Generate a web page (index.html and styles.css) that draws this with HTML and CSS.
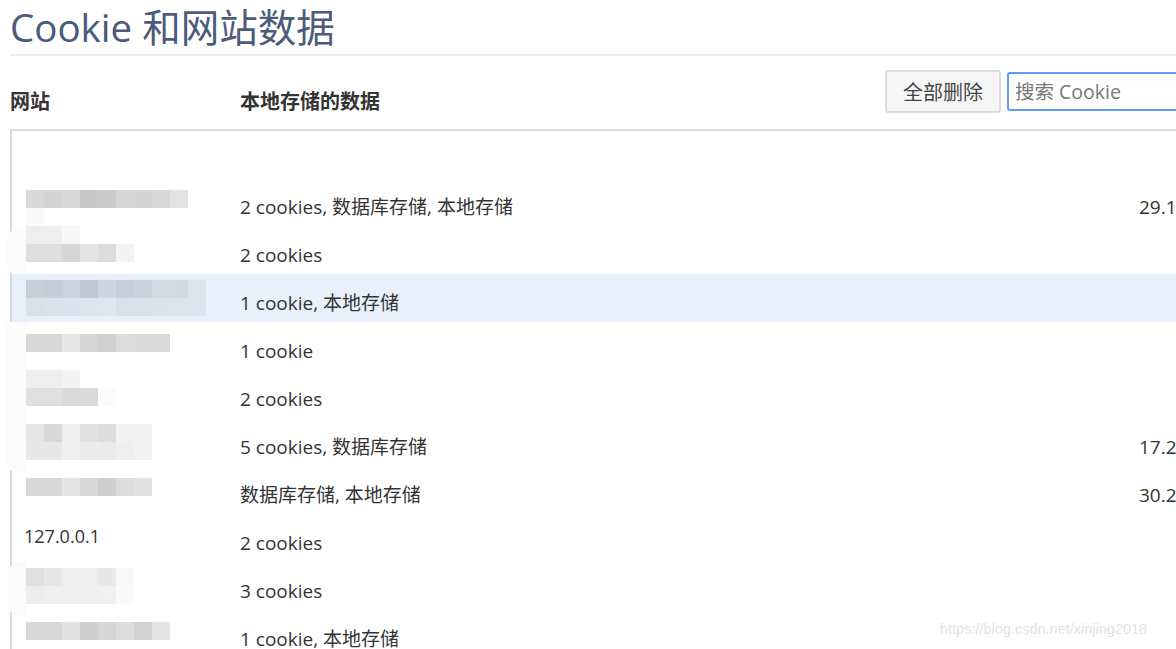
FILE: index.html
```html
<!DOCTYPE html>
<html lang="zh-CN">
<head>
<meta charset="utf-8">
<title>Cookie 和网站数据</title>
<link rel="stylesheet" href="styles.css">
</head>
<body>
<div class="page">
  <h1 class="title">Cookie 和网站数据</h1>
  <div class="header">
    <div class="hcol hsite">网站</div>
    <div class="hcol hdata">本地存储的数据</div>
    <div class="tools">
      <button class="btn">全部删除</button>
      <input class="search" type="text" placeholder="搜索 Cookie">
    </div>
  </div>
  <div class="list">
    <div class="row">
      <div class="site"><div class="mosaic o12">
        <div class="mr"><i style="background:#d9d9d9"></i><i style="background:#d4d4d4"></i><i style="background:#d8d8d8"></i><i style="background:#c8c8c8"></i><i style="background:#cacaca"></i><i style="background:#d6d6d6"></i><i style="background:#d4d4d4"></i><i style="background:#d9d9d9"></i><i style="background:#e3e3e3"></i></div>
        <div class="mr"><i style="background:#fafafa"></i></div>
      </div></div>
      <div class="data">2 cookies, 数据库存储, 本地存储</div>
      <div class="size">29.1</div>
    </div>
    <div class="row">
      <div class="site"><div class="mosaic o0">
        <div class="mr"><i style="background:#eeeeee"></i><i style="background:#eeeeee"></i><i style="background:#f7f7f7"></i></div>
        <div class="mr"><i style="background:#dedede"></i><i style="background:#dedede"></i><i style="background:#d6d6d6"></i><i style="background:#e4e4e4"></i><i style="background:#dcdcdc"></i><i style="background:#f3f3f3"></i></div>
      </div></div>
      <div class="data">2 cookies</div>
      <div class="size"></div>
    </div>
    <div class="row selected">
      <div class="site"><div class="mosaic o6">
        <div class="mr"><i style="background:#c8d0dc"></i><i style="background:#c4ceda"></i><i style="background:#cad4de"></i><i style="background:#bfc9d5"></i><i style="background:#cdd6e1"></i><i style="background:#c6d0dc"></i><i style="background:#c9d2de"></i><i style="background:#d3dbe5"></i><i style="background:#d2dae4"></i><i style="background:#dce4ee"></i></div>
        <div class="mr"><i style="background:#d8e0ea"></i><i style="background:#dae2ec"></i><i style="background:#d9e3ed"></i><i style="background:#dce4ee"></i><i style="background:#dde7f1"></i><i style="background:#d8e0ea"></i><i style="background:#d9e1eb"></i><i style="background:#dae4ed"></i><i style="background:#dce4ee"></i><i style="background:#dde6f0"></i></div>
      </div></div>
      <div class="data">1 cookie, 本地存储</div>
      <div class="size"></div>
    </div>
    <div class="row">
      <div class="site"><div class="mosaic o12">
        <div class="mr"><i style="background:#d8d8d8"></i><i style="background:#d8d8d8"></i><i style="background:#e6e6e6"></i><i style="background:#d6d6d6"></i><i style="background:#d0d0d0"></i><i style="background:#dcdcdc"></i><i style="background:#dadada"></i><i style="background:#dadada"></i></div>
      </div></div>
      <div class="data">1 cookie</div>
      <div class="size"></div>
    </div>
    <div class="row">
      <div class="site"><div class="mosaic o0">
        <div class="mr"><i style="background:#eeeeee"></i><i style="background:#eeeeee"></i><i style="background:#f3f3f3"></i></div>
        <div class="mr"><i style="background:#dfdfdf"></i><i style="background:#dfdfdf"></i><i style="background:#dadada"></i><i style="background:#dadada"></i><i style="background:#fbfbfb"></i></div>
      </div></div>
      <div class="data">2 cookies</div>
      <div class="size"></div>
    </div>
    <div class="row">
      <div class="site"><div class="mosaic o6">
        <div class="mr"><i style="background:#e6e6e6"></i><i style="background:#d8d8d8"></i><i style="background:#eeeeee"></i><i style="background:#e2e2e2"></i><i style="background:#dcdcdc"></i><i style="background:#f1f1f1"></i><i style="background:#f1f1f1"></i></div>
        <div class="mr"><i style="background:#e8e8e8"></i><i style="background:#e8e8e8"></i><i style="background:#efefef"></i><i style="background:#ebebeb"></i><i style="background:#eaeaea"></i><i style="background:#eeeeee"></i><i style="background:#f1f1f1"></i></div>
      </div></div>
      <div class="data">5 cookies, 数据库存储</div>
      <div class="size">17.2</div>
    </div>
    <div class="row">
      <div class="site"><div class="mosaic o12">
        <div class="mr"><i style="background:#d8d8d8"></i><i style="background:#d8d8d8"></i><i style="background:#e4e4e4"></i><i style="background:#d8d8d8"></i><i style="background:#cfcfcf"></i><i style="background:#dcdcdc"></i><i style="background:#e2e2e2"></i></div>
      </div></div>
      <div class="data">数据库存储, 本地存储</div>
      <div class="size">30.2</div>
    </div>
    <div class="row">
      <div class="site text">127.0.0.1</div>
      <div class="data">2 cookies</div>
      <div class="size"></div>
    </div>
    <div class="row">
      <div class="site"><div class="mosaic o6">
        <div class="mr"><i style="background:#e0e0e0"></i><i style="background:#e6e6e6"></i><i style="background:#eeeeee"></i><i style="background:#eeeeee"></i><i style="background:#e8e8e8"></i><i style="background:#f8f8f8"></i></div>
        <div class="mr"><i style="background:#ececec"></i><i style="background:#efefef"></i><i style="background:#efefef"></i><i style="background:#eeeeee"></i><i style="background:#f0f0f0"></i><i style="background:#fafafa"></i></div>
      </div></div>
      <div class="data">3 cookies</div>
      <div class="size"></div>
    </div>
    <div class="row">
      <div class="site"><div class="mosaic o12">
        <div class="mr"><i style="background:#d8d8d8"></i><i style="background:#d8d8d8"></i><i style="background:#e2e2e2"></i><i style="background:#cecece"></i><i style="background:#d6d6d6"></i><i style="background:#dcdcdc"></i><i style="background:#d2d2d2"></i><i style="background:#e4e4e4"></i></div>
      </div></div>
      <div class="data">1 cookie, 本地存储</div>
      <div class="size"></div>
    </div>
  </div>
  <div class="smudge s1"></div>
  <div class="smudge s2"></div>
  <div class="smudge s3"></div>
  <div class="watermark">https://blog.csdn.net/xinjing2018</div>
</div>
</body>
</html>
```
FILE: styles.css
```css
html, body {
  margin: 0;
  padding: 0;
  background: #ffffff;
  overflow: hidden;
}
body {
  font-family: "Open Sans", "Noto Sans CJK SC", sans-serif;
  color: #333333;
}
.page {
  position: relative;
  width: 1320px;
  padding-left: 10px;
  height: 649px;
}
.title {
  margin: 0;
  padding: 2px 0 2px 0;
  font-size: 38.5px;
  line-height: 50px;
  font-weight: 400;
  color: #4b5b7a;
  border-bottom: 2px solid #ebebeb;
}
.header {
  display: flex;
  align-items: flex-start;
  height: 73px;
}
.hcol {
  flex-shrink: 0;
  font-size: 20px;
  font-weight: 700;
  line-height: 28px;
  margin-top: 32px;
  color: #333333;
}
.hsite {
  width: 230px;
}
.hdata {
  width: 645px;
}
.tools {
  flex-shrink: 0;
  display: flex;
  align-items: flex-start;
  gap: 6px;
}
.btn {
  margin-top: 14px;
  width: 116px;
  height: 43px;
  border: 2px solid #dcdcdc;
  border-radius: 3px;
  background: #f6f6f6;
  font-family: "Noto Sans CJK SC", sans-serif;
  font-size: 20px;
  color: #444444;
  padding: 0;
}
.search {
  margin-top: 16px;
  width: 260px;
  height: 39px;
  box-sizing: border-box;
  border: 2px solid #5e9ef0;
  border-radius: 3px;
  padding: 0 6px;
  font-family: "Open Sans", "Noto Sans CJK SC", sans-serif;
  font-size: 19.5px;
  color: #333;
  outline: none;
}
.search::placeholder {
  color: #777777;
}
.list {
  border-top: 2px solid #dadada;
  border-left: 2px solid #dadada;
  padding-top: 47px;
}
.row {
  display: grid;
  grid-template-columns: 216px 899px 120px;
  height: 48px;
  padding-left: 12px;
}
.row.selected {
  background: #e8f1fb;
}
.site.text {
  padding-top: 12px;
  line-height: 20px;
  font-size: 18px;
  color: #333333;
}
.data, .size {
  padding-top: 19px;
  line-height: 20px;
  font-size: 19px;
  color: #333333;
  white-space: nowrap;
}
.mosaic {
  margin-left: 2px;
  display: flex;
  flex-direction: column;
}
.mosaic.o0 { margin-top: 0; }
.mosaic.o6 { margin-top: 6px; }
.mosaic.o12 { margin-top: 12px; }
.mr {
  display: flex;
  height: 18px;
}
.mr i {
  display: block;
  width: 18px;
  height: 18px;
}
.smudge {
  position: absolute;
  background: #ffffff;
}
.s1 {
  left: 6px;
  top: 230px;
  width: 20px;
  height: 44px;
  border-radius: 10px 0 0 10px;
  background: #fcfcfc;
}
.s2 {
  left: 6px;
  top: 322px;
  width: 20px;
  height: 150px;
  border-radius: 0 0 0 10px;
  background: #fcfcfc;
}
.s3 {
  left: 8px;
  top: 562px;
  width: 18px;
  height: 54px;
  border-radius: 12px 0 0 12px;
  background: #fbfbfb;
}
.watermark {
  position: absolute;
  left: 940px;
  top: 621px;
  font-family: "Liberation Sans", Arial, sans-serif;
  font-size: 14.5px;
  color: #e2e2e2;
  white-space: nowrap;
}
```
